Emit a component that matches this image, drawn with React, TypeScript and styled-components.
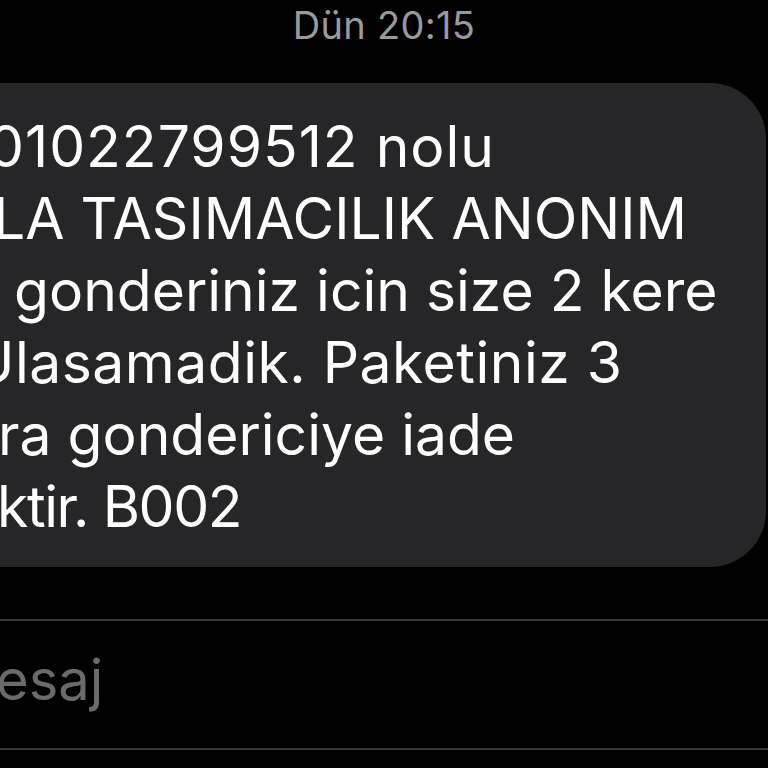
import React from "react";
import styled, { createGlobalStyle } from "styled-components";

const lines = [
  { text: "01022799512 nolu", shift: -12, track: 1 },
  { text: "LA TASIMACILIK ANONIM", shift: -7, track: 0 },
  { text: "gonderiniz icin size 2 kere", shift: 14, track: 0 },
  { text: "Ulasamadik. Paketiniz 3", shift: -28, track: 0.5 },
  { text: "ra gondericiye iade", shift: -2, track: 0 },
  { text: "ktir. B002", shift: -3, track: -1.4 },
];

const App = () => {
  return (
    <>
      <Global />
      <Screen>
        <Stamp>Dün 20:15</Stamp>
        <Bubble>
          {lines.map((l, i) => (
            <Line key={i} shift={l.shift} track={l.track}>
              {l.text}
            </Line>
          ))}
        </Bubble>
        <Composer>
          <Placeholder>esaj</Placeholder>
        </Composer>
      </Screen>
    </>
  );
};

export default App;

const Global = createGlobalStyle`
  html, body {
    margin: 0;
    padding: 0;
    background: #000;
    overflow: hidden;
  }
`;

const Screen = styled.div`
  width: 768px;
  height: 768px;
  background: #000;
  overflow: hidden;
  display: flex;
  flex-direction: column;
  font-family: Inter, "Liberation Sans", sans-serif;
`;

const Stamp = styled.div`
  height: 50px;
  display: flex;
  justify-content: center;
  align-items: center;
  color: #9a9a9c;
  font-size: 38px;
  letter-spacing: 0.3px;
`;

const Bubble = styled.div`
  margin-top: 33px;
  margin-left: -60px;
  width: 826px;
  box-sizing: border-box;
  background: #262628;
  border-radius: 56px;
  padding: 28px 0 24px 60px;
  display: flex;
  flex-direction: column;
`;

const Line = styled.div<{ shift: number; track: number }>`
  height: 72px;
  line-height: 72px;
  font-size: 57px;
  color: #fff;
  white-space: nowrap;
  margin-left: ${(p) => p.shift}px;
  letter-spacing: ${(p) => p.track}px;
`;

const Composer = styled.div`
  margin-top: 52px;
  height: 127px;
  border-top: 2px solid #38383a;
  border-bottom: 2px solid #38383a;
  display: flex;
  align-items: center;
`;

const Placeholder = styled.div`
  margin-left: -4px;
  font-size: 56px;
  color: #6b6b6d;
  padding-bottom: 10px;
`;
